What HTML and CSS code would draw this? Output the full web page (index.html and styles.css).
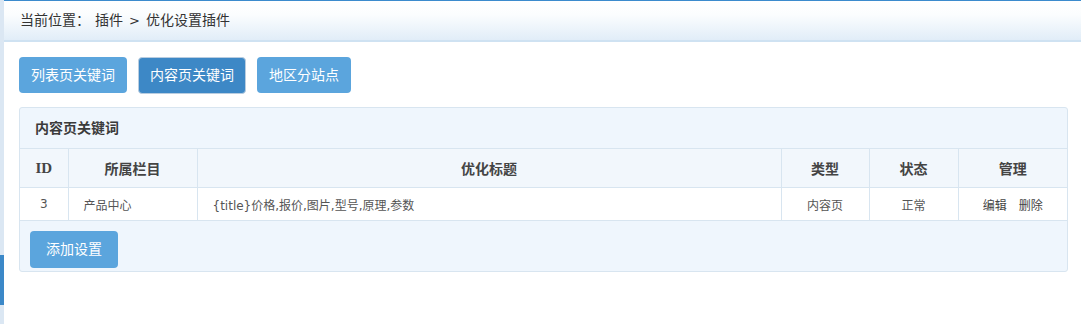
FILE: index.html
```html
<!DOCTYPE html>
<html lang="zh-CN">
<head>
    <meta charset="UTF-8">
    <meta name="viewport" content="width=device-width, initial-scale=1.0">
    <title>优化设置插件</title>
    <link rel="stylesheet" href="styles.css">
</head>
<body>
    <div class="side-strip">
        <div class="strip-mark"></div>
    </div>

    <div class="main">
        <div class="location">
            当前位置：<span class="loc-item">插件</span><span class="loc-sep">&gt;</span><span>优化设置插件</span>
        </div>

        <div class="content">
            <div class="tabs">
                <a class="btn" href="#">列表页关键词</a>
                <a class="btn active" href="#">内容页关键词</a>
                <a class="btn" href="#">地区分站点</a>
            </div>

            <div class="panel">
                <div class="panel-title">内容页关键词</div>
                <table class="list-table">
                    <colgroup>
                        <col class="col-id">
                        <col class="col-cat">
                        <col>
                        <col class="col-type">
                        <col class="col-state">
                        <col class="col-manage">
                    </colgroup>
                    <thead>
                        <tr>
                            <th class="th-id">ID</th>
                            <th>所属栏目</th>
                            <th>优化标题</th>
                            <th>类型</th>
                            <th>状态</th>
                            <th>管理</th>
                        </tr>
                    </thead>
                    <tbody>
                        <tr>
                            <td class="center">3</td>
                            <td>产品中心</td>
                            <td>{title}价格,报价,图片,型号,原理,参数</td>
                            <td class="center">内容页</td>
                            <td class="center">正常</td>
                            <td class="center">
                                <a class="op" href="#">编辑</a><a class="op" href="#">删除</a>
                            </td>
                        </tr>
                    </tbody>
                </table>
                <div class="panel-footer">
                    <a class="btn btn-add" href="#">添加设置</a>
                </div>
            </div>
        </div>
    </div>
</body>
</html>
```

FILE: styles.css
```css
html, body {
    height: 100%;
}

body {
    display: flex;
    margin: 0;
    background-color: #fff;
    font-family: "DejaVu Sans", "Noto Sans CJK SC", sans-serif;
    font-size: 12px;
    color: #444;
}

a {
    text-decoration: none;
}

.side-strip {
    width: 4px;
    flex-shrink: 0;
    background-color: #dbe7f3;
}

.strip-mark {
    margin-top: 255px;
    height: 50px;
    background-color: #3b88c8;
}

.main {
    flex: 1;
    min-width: 0;
}

/* breadcrumb bar */
.location {
    height: 39px;
    line-height: 39px;
    padding-left: 16px;
    border-top: 1px solid #3b8bcd;
    border-bottom: 2px solid #cfe2f2;
    background: linear-gradient(to bottom, #ffffff 0%, #fbfdfe 35%, #e1edf8 100%);
    font-size: 14px;
    color: #333;
}

.loc-item {
    margin-left: 5px;
}

.loc-sep {
    margin: 0 6px;
    font-size: 13px;
}

.content {
    padding: 15px 13px 0 15px;
}

.tabs {
    display: flex;
    gap: 11px;
    margin-bottom: 13px;
}

.btn {
    display: inline-block;
    height: 36px;
    line-height: 36px;
    padding: 0 12px;
    border-radius: 4px;
    background-color: #5ba5dd;
    color: #fff;
    font-size: 14px;
}

.btn.active {
    height: 35px;
    line-height: 35px;
    border: 1px solid #b9cde0;
    padding: 0 11px;
    background-color: #3d88c6;
}

/* panel */
.panel {
    border: 1px solid #d8e5f0;
    border-radius: 3px;
    background-color: #eff6fd;
    overflow: hidden;
}

.panel-title {
    height: 40px;
    line-height: 40px;
    padding-left: 15px;
    font-size: 14px;
    font-weight: bold;
    color: #3b3b3b;
}

.list-table {
    width: 100%;
    table-layout: fixed;
    border-collapse: collapse;
}

.col-id { width: 48px; }
.col-cat { width: 129px; }
.col-type { width: 88px; }
.col-state { width: 89px; }
.col-manage { width: 109px; }

.list-table th,
.list-table td {
    padding: 0;
    border-top: 1px solid #d8e5f0;
    border-bottom: 1px solid #d8e5f0;
    border-right: 1px solid #d8e5f0;
}

.list-table th:last-child,
.list-table td:last-child {
    border-right: none;
}

.list-table th {
    height: 38px;
    background-color: #f2f7fc;
    font-size: 14px;
    font-weight: bold;
    color: #444;
    text-align: center;
}

.list-table .th-id {
    font-family: "Liberation Serif", serif;
    font-size: 15px;
}

.list-table td {
    height: 32px;
    padding: 0 15px;
    background-color: #fff;
    color: #555;
}

.list-table td.center {
    text-align: center;
    padding: 0;
}

.op {
    margin: 0 6px;
    color: #444;
}

.panel-footer {
    padding: 10px 10px 3px;
}

.btn-add {
    height: 37px;
    line-height: 37px;
    padding: 0 16px;
}
```
